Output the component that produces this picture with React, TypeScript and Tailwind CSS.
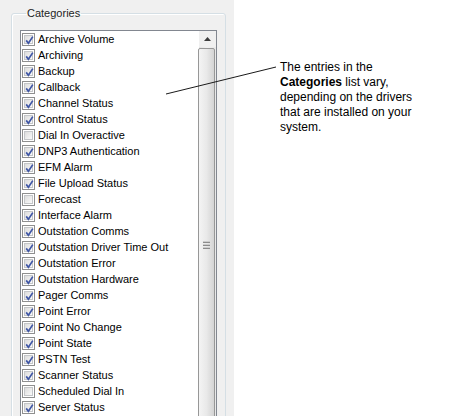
import React from 'react'

const categories: { label: string; checked: boolean }[] = [
  { label: 'Archive Volume', checked: true },
  { label: 'Archiving', checked: true },
  { label: 'Backup', checked: true },
  { label: 'Callback', checked: true },
  { label: 'Channel Status', checked: true },
  { label: 'Control Status', checked: true },
  { label: 'Dial In Overactive', checked: false },
  { label: 'DNP3 Authentication', checked: true },
  { label: 'EFM Alarm', checked: true },
  { label: 'File Upload Status', checked: true },
  { label: 'Forecast', checked: false },
  { label: 'Interface Alarm', checked: true },
  { label: 'Outstation Comms', checked: true },
  { label: 'Outstation Driver Time Out', checked: true },
  { label: 'Outstation Error', checked: true },
  { label: 'Outstation Hardware', checked: true },
  { label: 'Pager Comms', checked: true },
  { label: 'Point Error', checked: true },
  { label: 'Point No Change', checked: true },
  { label: 'Point State', checked: true },
  { label: 'PSTN Test', checked: true },
  { label: 'Scanner Status', checked: true },
  { label: 'Scheduled Dial In', checked: false },
  { label: 'Server Status', checked: true },
]

function Checkbox({ checked }: { checked: boolean }) {
  return (
    <div className="w-[13px] h-[13px] shrink-0 border border-[#8f8f8f] bg-white p-[1px]">
      <div className="relative w-full h-full border border-[#c4c6c9] bg-gradient-to-br from-[#dcdcdc] to-[#fafafa]">
        {checked && (
          <svg className="absolute -left-[2px] -top-[2px]" width="13" height="13" viewBox="0 0 13 13">
            <path d="M3.2 6.4 L5.4 9.2 L9.8 2.6" fill="none" stroke="#4057a6" strokeWidth="1.7" />
          </svg>
        )}
      </div>
    </div>
  )
}

export default function App() {
  return (
    <div
      className="relative w-[450px] h-[416px] flex overflow-hidden bg-white text-black"
      style={{ fontFamily: '"Liberation Sans", Arial, sans-serif' }}
    >
      {/* Left dialog panel */}
      <div className="w-[234px] h-full shrink-0 bg-[#f0f0f0] overflow-hidden pl-[11px] pt-[7px]">
        <fieldset className="w-[215px] h-[440px] border border-[#d5dfe5] rounded-[3px] shadow-[inset_1px_1px_0_#ffffff] px-[8px]">
          <legend className="ml-[6px] px-[1px] text-[11px] leading-[13px] text-[#1e1e1e]">Categories</legend>
          <div className="mt-[10px] w-[197px] h-[420px] border border-[#828790] bg-white flex">
            <div className="flex-1 flex flex-col">
              {categories.map((c) => (
                <div key={c.label} className="h-[16px] flex items-center pl-[1px] gap-[3px] text-[11px] leading-[16px] whitespace-nowrap">
                  <Checkbox checked={c.checked} />
                  <span>{c.label}</span>
                </div>
              ))}
            </div>
            {/* Scrollbar */}
            <div className="w-[17px] flex flex-col bg-gradient-to-r from-[#e2e2e2] via-[#f0f0f0] to-[#e8e8e8]">
              <div className="h-[17px] flex items-center justify-center bg-[#f0f0f0]">
                <svg width="7" height="4" viewBox="0 0 7 4">
                  <path d="M3.5 0 L7 4 L0 4 Z" fill="#3c3c3c" />
                </svg>
              </div>
              <div className="mt-[1px] h-[414px] -ml-[1px] mr-[1px] border border-[#979797] rounded-[2px] bg-gradient-to-r from-[#f4f4f4] via-[#e9e9e9] to-[#d4d4d4] flex items-center justify-center">
                <div className="flex flex-col gap-[1px] -mt-[8px]">
                  <div className="w-[7px] h-[2px] bg-gradient-to-b from-[#eeeeee] to-[#6e6e6e]" />
                  <div className="w-[7px] h-[2px] bg-gradient-to-b from-[#eeeeee] to-[#6e6e6e]" />
                  <div className="w-[7px] h-[2px] bg-gradient-to-b from-[#eeeeee] to-[#6e6e6e]" />
                </div>
              </div>
            </div>
          </div>
        </fieldset>
      </div>

      {/* Callout text */}
      <div className="flex-1 pl-[46px] pt-[60px] text-[12px] leading-[15px]">
        <p>
          The entries in the
          <br />
          <span className="font-bold">Categories</span> list vary,
          <br />
          depending on the drivers
          <br />
          that are installed on your
          <br />
          system.
        </p>
      </div>

      {/* Leader line */}
      <svg className="absolute left-0 top-0 pointer-events-none" width="450" height="416">
        <line x1="166" y1="94" x2="276" y2="67" stroke="#1a1a1a" strokeWidth="1" />
      </svg>
    </div>
  )
}
